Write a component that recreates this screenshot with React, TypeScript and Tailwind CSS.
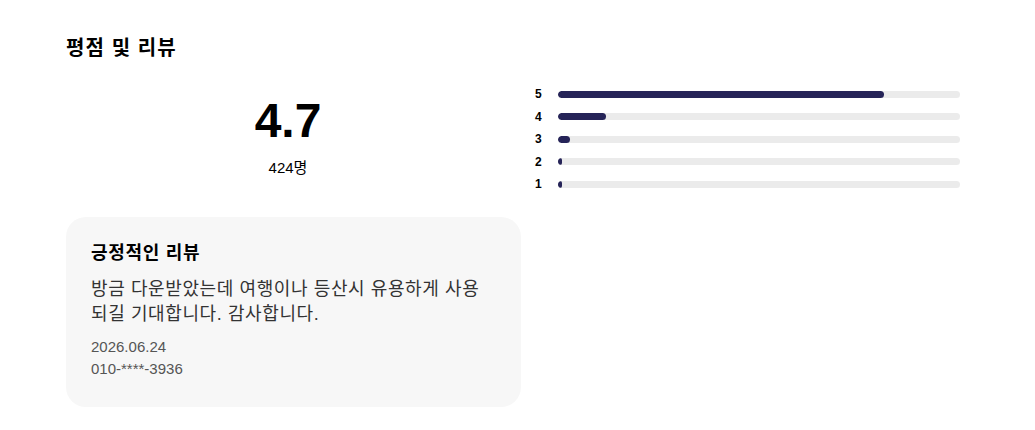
import React from 'react';

const ratings = [
    { score: 5, pct: 81 },
    { score: 4, pct: 12 },
    { score: 3, pct: 3 },
    { score: 2, pct: 1 },
    { score: 1, pct: 1 },
];

export default function App() {
    return (
        <div
            className="min-h-screen bg-white text-black pl-[66px] pr-[75px] pt-[35px]"
            style={{ fontFamily: '"Liberation Sans", Arial, "Noto Sans CJK KR", sans-serif' }}
        >
            {/* Title */}
            <h2 className="text-[20px] tracking-[1.1px] font-bold leading-[26px]">평점 및 리뷰</h2>

            <div className="flex mt-[25px]">
                {/* Summary */}
                <div className="w-[444px] flex flex-col items-center">
                    <div className="text-[48px] font-bold leading-[56px] mt-[7px]">4.7</div>
                    <div className="text-[15px] leading-[18px] mt-[10px]">424명</div>
                </div>

                {/* Distribution */}
                <div className="flex-1 ml-[25px] flex flex-col gap-[6px]">
                    {ratings.map((r) => (
                        <div key={r.score} className="flex items-center h-[16.5px]">
                            <span className="w-[23px] text-[12px] font-bold leading-none">{r.score}</span>
                            <div className="flex-1 h-[7px] rounded-full bg-[#ebebeb] overflow-hidden">
                                <div
                                    className="h-full rounded-full bg-[#262458] min-w-[4px]"
                                    style={{ width: `${r.pct}%` }}
                                />
                            </div>
                        </div>
                    ))}
                </div>
            </div>

            {/* Review card */}
            <div className="w-[455px] mt-[24px] rounded-[20px] bg-[#f7f7f7] px-[25px] pt-[24px] pb-[27px]">
                <h3 className="text-[18px] tracking-[0.7px] font-bold leading-[24px]">긍정적인 리뷰</h3>
                <p className="mt-[12px] text-[18px] tracking-[0.6px] leading-[25px] text-[#333333]">
                    방금 다운받았는데 여행이나 등산시 유용하게 사용되길 기대합니다. 감사합니다.
                </p>
                <div className="mt-[9px] text-[15px] leading-[22px] text-[#555555]">
                    <div>2026.06.24</div>
                    <div>010-****-3936</div>
                </div>
            </div>
        </div>
    );
}
